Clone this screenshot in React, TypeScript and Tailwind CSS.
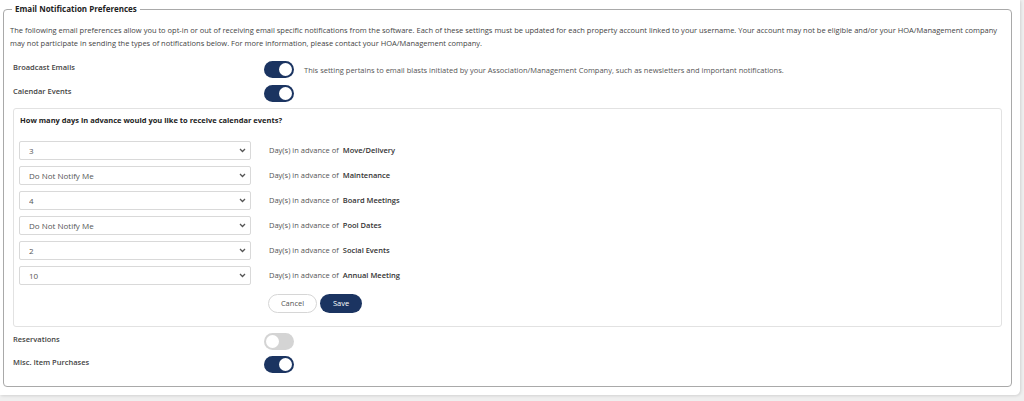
import React, { useState } from "react";

const NAVY = "bg-[#1b3461]";

function Toggle({ on, onChange }: { on: boolean; onChange: () => void }) {
  return (
    <button
      type="button"
      onClick={onChange}
      className={`relative flex h-[17px] w-[30px] shrink-0 items-center rounded-full px-[2px] ${
        on ? "justify-end bg-[#1b3461]" : "justify-start bg-[#d4d4d4]"
      }`}
    >
      <span className="block h-[13px] w-[13px] rounded-full bg-white" />
    </button>
  );
}

const eventTypes = [
  { name: "Move/Delivery", value: "3" },
  { name: "Maintenance", value: "Do Not Notify Me" },
  { name: "Board Meetings", value: "4" },
  { name: "Pool Dates", value: "Do Not Notify Me" },
  { name: "Social Events", value: "2" },
  { name: "Annual Meeting", value: "10" },
];

const options = ["Do Not Notify Me", "1", "2", "3", "4", "5", "6", "7", "8", "9", "10"];

export default function App() {
  const [broadcast, setBroadcast] = useState(true);
  const [calendar, setCalendar] = useState(true);
  const [reservations, setReservations] = useState(false);
  const [misc, setMisc] = useState(true);
  const [days, setDays] = useState(eventTypes.map((e) => e.value));

  return (
    <div
      className="min-h-[401px] bg-[#efefef] text-[#333] text-[7.5px] leading-[13px]"
      style={{ fontFamily: '"Open Sans", "Liberation Sans", sans-serif' }}
    >
      <div className="w-[1020px] rounded-br-[5px] bg-white pl-[3px] pr-[8px] pt-[3px] pb-[8px] shadow-[1px_1px_3px_rgba(0,0,0,0.12)]">
        <fieldset className="rounded-[4px] border border-[#a9a9a9] pl-[6px] pr-[9px] pb-[13px]">
          <legend className="ml-[2px] px-[3px] text-[8px] font-bold leading-[12px] text-[#222]">
            Email Notification Preferences
          </legend>

          <p className="mt-[9px] text-[#444]">
            The following email preferences allow you to opt-in or out of receiving email specific notifications from the
            software. Each of these settings must be updated for each property account linked to your username. Your account
            may not be eligible and/or your HOA/Management company may not participate in sending the types of notifications
            below. For more information, please contact your HOA/Management company.
          </p>

          <div className="pl-[3px]">
            {/* Broadcast */}
            <div className="mt-[11px] flex items-start">
              <div className="w-[251px] font-semibold text-[#444]">Broadcast Emails</div>
              <Toggle on={broadcast} onChange={() => setBroadcast(!broadcast)} />
              <div className="ml-[10px] pt-[3px] text-[#555]">
                This setting pertains to email blasts initiated by your Association/Management Company, such as newsletters and
                important notifications.
              </div>
            </div>

            {/* Calendar */}
            <div className="mt-[7px] flex items-start">
              <div className="w-[251px] font-semibold text-[#444]">Calendar Events</div>
              <Toggle on={calendar} onChange={() => setCalendar(!calendar)} />
            </div>

            {calendar && (
              <div className="mt-[6px] rounded-[3px] border border-[#e2e2e2] pl-[5px] pt-[5px] pb-[13px]">
                <div className="pl-[1px] font-bold text-[#222]">How many days in advance would you like to receive calendar events?</div>

                <div className="mt-[14px] flex flex-col gap-[6px]">
                  {eventTypes.map((e, i) => (
                    <div key={e.name} className="flex items-center">
                      <div className="relative w-[232px]">
                        <select
                          value={days[i]}
                          onChange={(ev) => setDays(days.map((d, j) => (j === i ? ev.target.value : d)))}
                          className="block h-[19px] w-full appearance-none rounded-[2px] border border-[#d9d9d9] bg-white pl-[9px] text-[8px] text-[#555] outline-none"
                          style={{ fontFamily: '"Open Sans", "Liberation Sans", sans-serif' }}
                        >
                          {options.map((o) => (
                            <option key={o} value={o}>
                              {o}
                            </option>
                          ))}
                        </select>
                        <svg
                          className="pointer-events-none absolute right-[5px] top-[7px] h-[5px] w-[7px]"
                          viewBox="0 0 7 5"
                          fill="none"
                          stroke="#555"
                          strokeWidth="1.3"
                        >
                          <path d="M1 1l2.5 2.5L6 1" />
                        </svg>
                      </div>
                      <div className="ml-[18px] text-[#555]">
                        Day(s) in advance of <span className="ml-[2px] font-semibold text-[#333]">{e.name}</span>
                      </div>
                    </div>
                  ))}
                </div>

                <div className="mt-[9px] ml-[249px] flex gap-[3px]">
                  <button className="h-[19px] w-[49px] rounded-full border border-[#d6d6d6] bg-white text-[#555]">Cancel</button>
                  <button className={`h-[19px] w-[42px] rounded-full ${NAVY} text-white`}>Save</button>
                </div>
              </div>
            )}

            {/* Reservations */}
            <div className="mt-[6px] flex items-start">
              <div className="w-[251px] font-semibold text-[#444]">Reservations</div>
              <Toggle on={reservations} onChange={() => setReservations(!reservations)} />
            </div>

            {/* Misc */}
            <div className="mt-[6px] flex items-start">
              <div className="w-[251px] font-semibold text-[#444]">Misc. Item Purchases</div>
              <Toggle on={misc} onChange={() => setMisc(!misc)} />
            </div>
          </div>
        </fieldset>
      </div>
    </div>
  );
}
